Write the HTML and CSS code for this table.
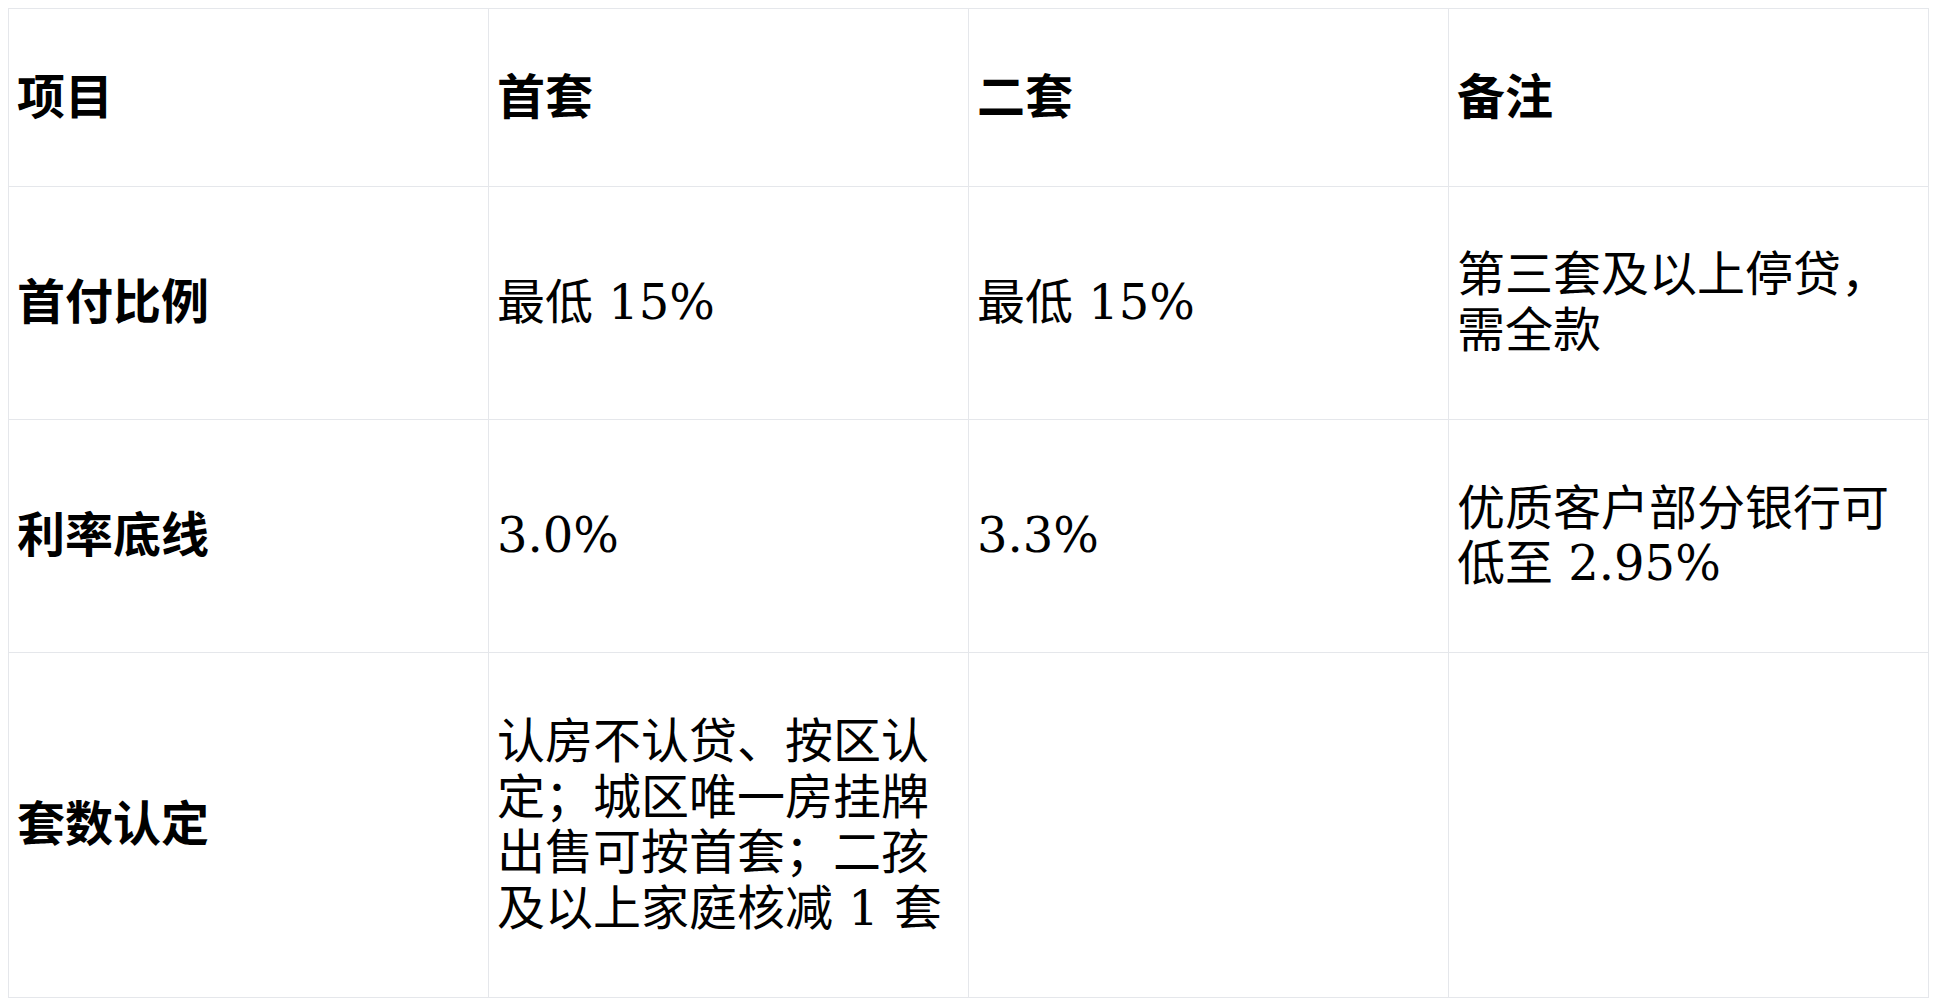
FILE: index.html
```html
<!DOCTYPE html>
<html lang="zh">
<head>
<meta charset="utf-8">
<link rel="stylesheet" href="styles.css">
</head>
<body>
<table class="grid">
  <colgroup><col class="c"><col class="c"><col class="c"><col class="c"></colgroup>
  <thead>
    <tr><th>项目</th><th>首套</th><th>二套</th><th>备注</th></tr>
  </thead>
  <tbody>
    <tr><th>首付比例</th><td>最低 15%</td><td>最低 15%</td><td>第三套及以上停贷，需全款</td></tr>
    <tr><th>利率底线</th><td>3.0%</td><td>3.3%</td><td>优质客户部分银行可低至 2.95%</td></tr>
    <tr><th>套数认定</th><td>认房不认贷、按区认定；城区唯一房挂牌出售可按首套；二孩及以上家庭核减 1 套</td><td></td><td></td></tr>
  </tbody>
</table>
</body>
</html>
```
FILE: styles.css
```css
body {
  margin: 8px;
  background: #ffffff;
  font-family: "DejaVu Serif", "Noto Sans CJK SC", serif;
  color: #000000;
}
.grid {
  border-collapse: collapse;
  table-layout: fixed;
  width: 1921px;
  font-size: 48px;
  line-height: 1.16;
}
.grid .c { width: 25%; }
.grid th,
.grid td {
  border: 1px solid #e5e7eb;
  padding: 60.5px 8px;
  text-align: left;
  vertical-align: middle;
  word-break: break-all;
}
.grid th {
  font-weight: bold;
}
.grid td {
  font-weight: normal;
}
```
